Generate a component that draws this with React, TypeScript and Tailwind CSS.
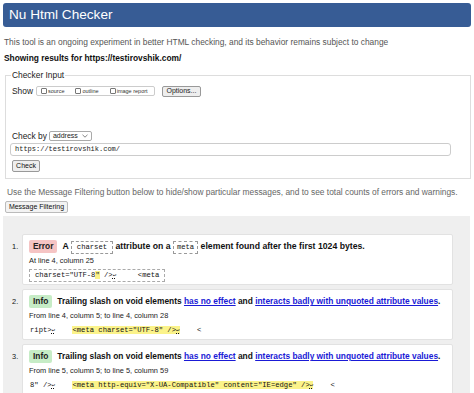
import React from 'react';

const mono = "font-['Liberation_Mono','DejaVu_Sans_Mono',monospace]";

const Ret = () => <span className="text-[6px] underline decoration-dotted">↩</span>;

const Badge: React.FC<{ kind: 'error' | 'info' }> = ({ kind }) =>
  kind === 'error' ? (
    <span className="inline-flex items-center h-[13px] px-[4px] mr-[5px] rounded-[2px] bg-[#f5c4c4] text-[#222] font-bold">
      Error
    </span>
  ) : (
    <span className="inline-flex items-center h-[13px] px-[4px] mr-[5px] rounded-[2px] bg-[#c6ecc6] text-[#222] font-bold">
      Info
    </span>
  );

const Code: React.FC<{ children: React.ReactNode; wide?: boolean }> = ({ children, wide }) => (
  <code
    className={`${mono} inline-block ${wide ? 'px-[5px]' : 'px-[3px]'} leading-[11px] border border-dashed border-[#999] font-normal text-[7.2px]`}
  >
    {children}
  </code>
);

const Link: React.FC<{ children: React.ReactNode }> = ({ children }) => (
  <a className="text-[#1a1ad6] underline">{children}</a>
);

interface Msg {
  n: number;
  kind: 'error' | 'info';
  title: React.ReactNode;
  loc: string;
  extract: React.ReactNode;
  boxed?: boolean;
}

const trailing = (
  <>
    Trailing slash on void elements <Link>has no effect</Link> and{' '}
    <Link>interacts badly with unquoted attribute values</Link>.
  </>
);

const messages: Msg[] = [
  {
    n: 1,
    kind: 'error',
    title: (
      <span className="text-[8.7px]">
        A <Code wide>charset</Code> attribute on a <Code>meta</Code> element found after the first 1024 bytes.
      </span>
    ),
    loc: 'At line 4, column 25',
    boxed: true,
    extract: (
      <>
        {'charset="UTF-8'}
        <span className="bg-[#fbf38a]">"</span>
        {' />'}
        <Ret />
        {'     <meta'}
      </>
    ),
  },
  {
    n: 2,
    kind: 'info',
    title: trailing,
    loc: 'From line 4, column 5; to line 4, column 28',
    extract: (
      <>
        {'ript>'}
        <Ret />
        {'    '}
        <span className="bg-[#fbf38a]">
          {'<meta charset="UTF-8" />'}
          <Ret />
        </span>
        {'    <'}
      </>
    ),
  },
  {
    n: 3,
    kind: 'info',
    title: trailing,
    loc: 'From line 5, column 5; to line 5, column 59',
    extract: (
      <>
        {'8" />'}
        <Ret />
        {'    '}
        <span className="bg-[#fbf38a]">
          {'<meta http-equiv="X-UA-Compatible" content="IE=edge" />'}
          <Ret />
        </span>
        {'    <'}
      </>
    ),
  },
];

const Check: React.FC<{ label: string }> = ({ label }) => (
  <span className="flex items-center gap-[1px]">
    <span className="w-[6px] h-[6px] border border-[#777] rounded-[1px] bg-white" />
    <span className="text-[5.5px] text-[#333]">{label}</span>
  </span>
);

export default function App() {
  return (
    <div className="w-[474px] h-[393px] overflow-hidden bg-white text-[8.4px] text-[#111] font-['Liberation_Sans',Arial,sans-serif]">
      <div className="mx-[3px] mt-[3px] h-[24px] rounded-[3px] bg-[#375c95] flex items-center pl-[6px] text-white text-[13.6px]">
        Nu Html Checker
      </div>

      <p className="mt-[9px] pl-[4px] h-[12px] leading-[12px] text-[#555]">
        This tool is an ongoing experiment in better HTML checking, and its behavior remains subject to change
      </p>
      <p className="mt-[4px] pl-[4px] h-[12px] leading-[12px] font-bold">
        Showing results for https://testirovshik.com/
      </p>

      <fieldset className="mt-[5px] ml-[5px] w-[466px] border border-[#ddd] pl-[6px] pr-[19px] pb-[6px]">
        <legend className="ml-[-1px] px-[1px] leading-[12px] text-[#222]">Checker Input</legend>
        <div className="mt-[4px] flex items-center h-[12px] text-[#222]">
          <span>Show</span>
          <span className="ml-[3px] w-[119px] h-[10px] flex items-center gap-[11px] pl-[4px] border border-[#ccc] rounded-[2px]">
            <Check label="source" />
            <Check label="outline" />
            <Check label="image report" />
          </span>
          <span className="ml-[7px] w-[39px] h-[11px] flex items-center justify-center border border-[#999] rounded-[2px] bg-[#eee] text-[7px]">
            Options...
          </span>
        </div>
        <div className="mt-[33px] flex items-center h-[12px] text-[#222]">
          <span>Check by</span>
          <span className="ml-[2px] w-[43px] h-[10px] flex items-center justify-between px-[3px] border border-[#aaa] rounded-[2px] text-[7px]">
            address
            <svg width="6" height="4" viewBox="0 0 6 4">
              <path d="M0.5 0.8 L3 3.2 L5.5 0.8" fill="none" stroke="#666" strokeWidth="0.8" />
            </svg>
          </span>
        </div>
        <div
          className={`${mono} mt-[1px] ml-[-2px] h-[13px] flex items-center pl-[4px] border border-[#ccc] rounded-[3px] text-[7px] text-[#222]`}
        >
          https://testirovshik.com/
        </div>
        <span className="mt-[4px] w-[28px] h-[12px] flex items-center justify-center border border-[#999] rounded-[2px] bg-[#eee] text-[7px]">
          Check
        </span>
      </fieldset>

      <p className="mt-[7px] pl-[7px] h-[12px] leading-[12px] text-[#666]">
        Use the Message Filtering button below to hide/show particular messages, and to see total counts of errors and warnings.
      </p>
      <span className="mt-[3px] ml-[5px] w-[63px] h-[12px] flex items-center justify-center border border-[#bbb] rounded-[2px] bg-[#f3f3f3] text-[7px]">
        Message Filtering
      </span>

      <div className="mt-[3px] mx-[3px] w-[467px] h-[200px] bg-[#efefef] pt-[18px] pl-[9px] pr-[17px] flex flex-col gap-[4px]">
        {messages.map((m) => (
          <div key={m.n} className="flex">
            <span className="w-[10px] pt-[8px] text-[7.4px] leading-[10px]">{m.n}.</span>
            <div className="flex-1 h-[51px] bg-white border border-[#e2e2e2] rounded-[2px] pl-[6px] pt-[5px]">
              <div className="flex items-center h-[13px] font-bold whitespace-nowrap">
                <Badge kind={m.kind} />
                <span className="flex items-center whitespace-pre">{m.title}</span>
              </div>
              <div className="mt-[2px] h-[11px] leading-[11px] text-[7.4px] text-[#222]">{m.loc}</div>
              <div
                className={`${mono} mt-[3px] inline-block whitespace-pre text-[7.2px] leading-[11px] ${
                  m.boxed ? 'px-[5px] border border-dashed border-[#aaa]' : 'border border-transparent'
                }`}
              >
                {m.extract}
              </div>
            </div>
          </div>
        ))}
      </div>
    </div>
  );
}
